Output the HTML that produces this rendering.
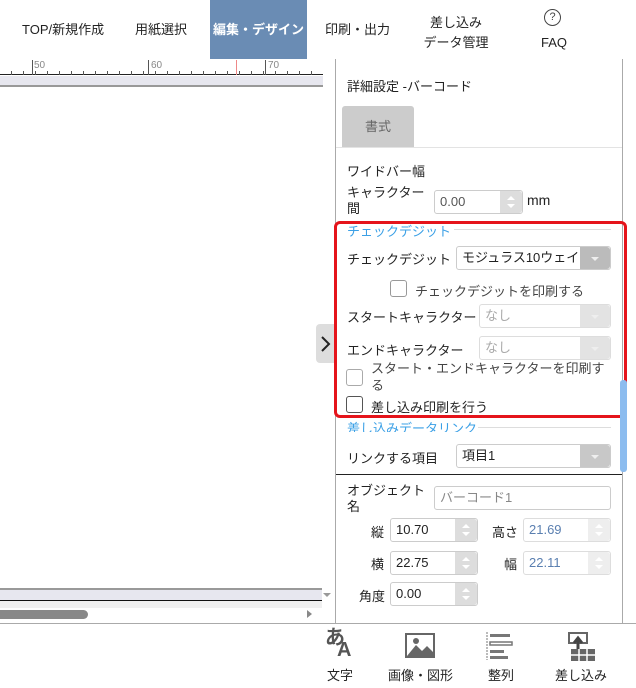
<!DOCTYPE html>
<html><head><meta charset="utf-8"><style>
*{box-sizing:border-box;margin:0;padding:0}
body{width:636px;height:688px;overflow:hidden;background:#fff;font-family:"Liberation Sans","Noto Sans CJK JP",sans-serif;font-size:13px;color:#222;position:relative}
.a{position:absolute;white-space:nowrap}
.nav{font-size:13px;color:#222;text-align:center;line-height:16px}
.inp{position:absolute;border:1px solid #ccc;border-radius:3px;background:#fff;font-size:13px;padding-left:5px;line-height:22px;height:24px;white-space:nowrap}
.spin{position:absolute;right:0;top:0;width:22px;height:100%;background:#ddd;border-radius:0 3px 3px 0}
.spin:before{content:"";position:absolute;left:7px;top:5px;border:4px solid transparent;border-bottom:4px solid #fff;border-top:0}
.spin:after{content:"";position:absolute;left:7px;bottom:5px;border:4px solid transparent;border-top:4px solid #fff;border-bottom:0}
.sel .dd{position:absolute;right:0;top:0;width:30px;height:100%;background:#ccc;border-radius:0 3px 3px 0}
.sel .dd:after{content:"";position:absolute;left:11px;top:10px;border:4px solid transparent;border-top:4px solid #eee}
.cb{position:absolute;width:17px;height:17px;border:1px solid #555;border-radius:3px;background:#fff}
.lbl{position:absolute;font-size:13px;white-space:nowrap}
.sec{position:absolute;color:#3ba0e6;font-size:13px;white-space:nowrap}
</style></head><body>
<!-- nav -->
<div class="a nav" style="left:22px;top:22px">TOP/新規作成</div>
<div class="a nav" style="left:135px;top:22px">用紙選択</div>
<div class="a" style="left:210px;top:0;width:97px;height:59px;background:#6a8cb4"></div>
<div class="a nav" style="left:213px;top:22px;color:#fff;font-weight:bold">編集・デザイン</div>
<div class="a nav" style="left:325px;top:22px">印刷・出力</div>
<div class="a nav" style="left:418px;top:13px;width:76px;line-height:20px">差し込み<br>データ管理</div>
<div class="a" style="left:544px;top:9px;width:17px;height:17px;border:1.2px solid #444;border-radius:50%;font-size:11px;text-align:center;line-height:15px;color:#444">?</div>
<div class="a nav" style="left:541px;top:35px">FAQ</div>
<!-- ruler -->
<div class="a" style="left:0;top:60px;width:323px;height:15px;background:#fff;border-bottom:1px solid #222"></div>
<div class="a" style="left:0;top:61px;width:323px;height:14px;background:repeating-linear-gradient(90deg,transparent 0 11px,#555 11px 12px);-webkit-mask:linear-gradient(transparent 10px,#000 10px)"></div>
<div class="a" style="left:32px;top:60px;width:1px;height:15px;background:#555"></div>
<div class="a" style="left:148px;top:60px;width:1px;height:15px;background:#555"></div>
<div class="a" style="left:265px;top:60px;width:1px;height:15px;background:#555"></div>
<div class="a" style="left:236px;top:60px;width:1px;height:15px;background:#e88"></div>
<div class="a" style="left:34px;top:60px;font-size:10px;color:#888">50</div>
<div class="a" style="left:151px;top:60px;font-size:10px;color:#888">60</div>
<div class="a" style="left:268px;top:60px;font-size:10px;color:#888">70</div>
<div class="a" style="left:0;top:76px;width:323px;height:11px;background:#e7e7ef;border-bottom:2px solid #999"></div>
<!-- bottom of canvas -->
<div class="a" style="left:0;top:588px;width:322px;height:13px;background:#e7e7ef;border-top:2px solid #999;border-bottom:1px solid #111"></div>
<div class="a" style="left:0;top:601px;width:322px;height:7px;background:#f0f0f0"></div>
<div class="a" style="left:0;top:610px;width:88px;height:9px;background:#888;border-radius:0 5px 5px 0"></div>
<div class="a" style="left:307px;top:610px;border:4px solid transparent;border-left:5px solid #888"></div>
<div class="a" style="left:323px;top:593px;border:4px solid transparent;border-top:4px solid #999"></div>
<div class="a" style="left:0;top:623px;width:636px;height:1px;background:#aaa"></div>
<!-- toggle -->
<div class="a" style="left:316px;top:324px;width:19px;height:39px;background:#ddd;border-radius:4px 0 0 4px"></div>
<svg class="a" style="left:319px;top:335px" width="12" height="18"><path d="M3 2 L10 9 L3 16" stroke="#222" stroke-width="2" fill="none"/></svg>
<!-- panel -->
<div class="a" style="left:335px;top:59px;width:1px;height:565px;background:#aaa"></div>
<div class="a" style="left:622px;top:59px;width:1px;height:565px;background:#aaa"></div>
<div class="a" style="left:347px;top:76px;font-size:13px">詳細設定 -バーコード</div>
<div class="a" style="left:342px;top:106px;width:72px;height:42px;background:#ccc;border-radius:3px 3px 0 0;text-align:center;line-height:42px;color:#666">書式</div>
<div class="a" style="left:336px;top:147px;width:286px;height:1px;background:#e3e3e3"></div>
<div class="lbl" style="left:347px;top:161px">ワイドバー幅</div>
<div class="lbl" style="left:347px;top:185px;line-height:16px">キャラクター<br>間</div>
<div class="inp" style="left:434px;top:190px;width:89px;color:#555">0.00<div class="spin"></div></div>
<div class="lbl" style="left:527px;top:192px;font-size:14px">mm</div>
<div class="sec" style="left:347px;top:221px">チェックデジット</div>
<div class="a" style="left:454px;top:229px;width:157px;height:1px;background:#ddd"></div>
<div class="lbl" style="left:347px;top:249px">チェックデジット</div>
<div class="inp sel" style="left:456px;top:246px;width:155px;line-height:22px">モジュラス10ウェイ<div class="dd" style="background:#bbb"></div></div>
<div class="cb" style="left:390px;top:280px;border-color:#999"></div>
<div class="lbl" style="left:415px;top:281px;color:#444">チェックデジットを印刷する</div>
<div class="lbl" style="left:347px;top:307px">スタートキャラクター</div>
<div class="inp sel" style="left:479px;top:304px;width:132px;color:#aaa;border-color:#ddd">なし<div class="dd" style="background:#e3e3e3"></div></div>
<div class="lbl" style="left:347px;top:340px">エンドキャラクター</div>
<div class="inp sel" style="left:479px;top:336px;width:132px;color:#aaa;border-color:#ddd">なし<div class="dd" style="background:#e3e3e3"></div></div>
<div class="cb" style="left:346px;top:369px;border-color:#aaa"></div>
<div class="lbl" style="left:371px;top:360px;line-height:17px;color:#444">スタート・エンドキャラクターを印刷す<br>る</div>
<div class="cb" style="left:346px;top:396px"></div>
<div class="lbl" style="left:371px;top:397px">差し込み印刷を行う</div>
<div class="a" style="left:334px;top:221px;width:293px;height:197px;border:3px solid #e5141b;border-radius:6px"></div>
<div class="sec" style="left:347px;top:418px;height:14px;overflow:hidden">差し込みデータリンク</div>
<div class="a" style="left:478px;top:427px;width:133px;height:1px;background:#ddd"></div>
<div class="a" style="left:620px;top:380px;width:7px;height:92px;background:#8cbcef;border-radius:3px"></div>
<div class="lbl" style="left:347px;top:448px">リンクする項目</div>
<div class="inp sel" style="left:456px;top:444px;width:155px">項目1<div class="dd" style="background:#c8c8c8"></div></div>
<div class="a" style="left:336px;top:474px;width:286px;height:1px;background:#222"></div>
<div class="lbl" style="left:347px;top:483px;line-height:16px">オブジェクト<br>名</div>
<div class="inp" style="left:434px;top:486px;width:177px;color:#888">バーコード1</div>
<div class="lbl" style="left:371px;top:522px">縦</div>
<div class="inp" style="left:390px;top:518px;width:88px">10.70<div class="spin"></div></div>
<div class="lbl" style="left:492px;top:522px">高さ</div>
<div class="inp" style="left:523px;top:518px;width:88px;color:#5a7fb0;border-color:#ddd">21.69<div class="spin" style="background:#eee"></div></div>
<div class="lbl" style="left:371px;top:554px">横</div>
<div class="inp" style="left:390px;top:551px;width:88px">22.75<div class="spin"></div></div>
<div class="lbl" style="left:504px;top:554px">幅</div>
<div class="inp" style="left:523px;top:551px;width:88px;color:#5a7fb0;border-color:#ddd">22.11<div class="spin" style="background:#eee"></div></div>
<div class="lbl" style="left:359px;top:586px">角度</div>
<div class="inp" style="left:390px;top:582px;width:88px">0.00<div class="spin"></div></div>
<!-- toolbar -->
<div class="a" style="left:325px;top:628px;font-size:20px;font-weight:bold;color:#555;line-height:20px">あ</div>
<div class="a" style="left:337px;top:640px;font-size:20px;font-weight:bold;color:#555;line-height:20px">A</div>
<div class="lbl" style="left:327px;top:665px">文字</div>
<svg class="a" style="left:405px;top:633px" width="30" height="25"><rect x="1" y="1" width="28" height="23" fill="#fff" stroke="#666" stroke-width="2"/><path d="M2 23 L11 12 L17 18 L22 13 L28 19 V23Z" fill="#666"/><circle cx="11" cy="8" r="3" fill="#666"/></svg>
<div class="lbl" style="left:388px;top:665px">画像・図形</div>
<svg class="a" style="left:485px;top:631px" width="28" height="30"><path d="M2 1V29" stroke="#777" stroke-dasharray="2 1"/><rect x="5" y="3" width="20" height="3" fill="#777"/><rect x="5" y="11" width="22" height="3" fill="none" stroke="#777" stroke-width="1.5"/><rect x="5" y="19" width="14" height="3" fill="#777"/><rect x="5" y="25" width="18" height="3" fill="#777"/></svg>
<div class="lbl" style="left:488px;top:665px">整列</div>
<svg class="a" style="left:565px;top:631px" width="32" height="32"><rect x="4" y="2" width="18" height="10" fill="#fff" stroke="#666" stroke-width="2"/><path d="M13 8 L13 18 M9 12 L13 7 L17 12" stroke="#444" stroke-width="3" fill="none"/><rect x="6" y="18" width="24" height="12" fill="#666"/><path d="M6 24H30M14 18V30M22 18V30" stroke="#fff" stroke-width="1.5"/></svg>
<div class="lbl" style="left:555px;top:665px">差し込み</div>
</body></html>
